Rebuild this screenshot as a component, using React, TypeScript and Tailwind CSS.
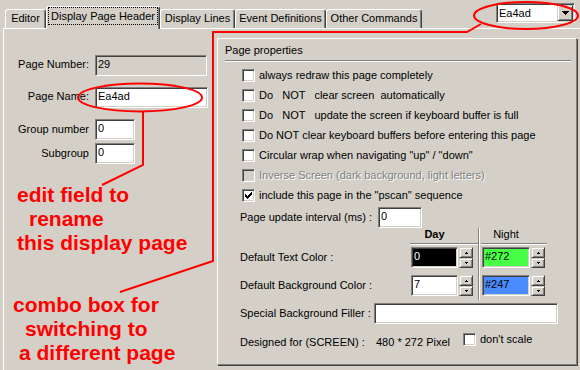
const sunken =
  "border border-t-[#808080] border-l-[#808080] border-b-white border-r-white shadow-[inset_1px_1px_0_#404040,inset_-1px_-1px_0_#d4d0c8]";
const raised =
  "border border-t-[#d4d0c8] border-l-[#d4d0c8] border-b-[#404040] border-r-[#404040] shadow-[inset_1px_1px_0_#ffffff,inset_-1px_-1px_0_#808080]";

function Tab({ label, w, active }: { label: string; w: string; active?: boolean }) {
  if (active) {
    return (
      <div
        className={`relative z-10 ${w} h-[23px] -mb-px bg-[#d4d0c8] border-t border-l border-r border-t-white border-l-white border-r-[#404040] shadow-[inset_-1px_0_0_#808080] rounded-t-[3px] px-px pb-[4px]`}
      >
        <div className="h-full border border-dotted border-black flex items-center justify-center leading-[13px]">
          {label}
        </div>
      </div>
    );
  }
  return (
    <div
      className={`${w} h-[19px] border-t border-l border-r border-t-white border-l-white border-r-[#404040] shadow-[inset_-1px_0_0_#808080] rounded-t-[3px] flex items-center justify-center pb-[2px] leading-[13px]`}
    >
      {label}
    </div>
  );
}

function Check({ checked, disabled }: { checked?: boolean; disabled?: boolean }) {
  return (
    <div
      className={`${sunken} w-[13px] h-[13px] shrink-0 ${disabled ? "bg-[#d4d0c8]" : "bg-white"} flex items-center justify-center`}
    >
      {checked && (
        <svg width="7" height="7" viewBox="0 0 7 7">
          <path
            d="M0 2h1v3H0z M1 3h1v3H1z M2 4h1v3H2z M3 3h1v3H3z M4 2h1v3H4z M5 1h1v3H5z M6 0h1v3H6z"
            fill="#000"
          />
        </svg>
      )}
    </div>
  );
}

function CheckRow({ label, checked, disabled }: { label: string; checked?: boolean; disabled?: boolean }) {
  return (
    <div className="h-[20px] flex items-center pl-[24px] gap-[4px]">
      <Check checked={checked} disabled={disabled} />
      <span
        className={`whitespace-pre leading-[13px] ${disabled ? "text-[#808080] [text-shadow:1px_1px_0_#ffffff]" : ""}`}
      >
        {label}
      </span>
    </div>
  );
}

function SpinBox({ value, w, color }: { value: string; w: string; color: string }) {
  return (
    <div className="flex gap-px">
      <div className={`${sunken} ${w} h-[21px] ${color} px-[2px] leading-[17px]`}>{value}</div>
      <div className="flex flex-col w-[14px] h-[21px]">
        <div className={`${raised} h-[11px] bg-[#d4d0c8] flex items-center justify-center`}>
          <svg width="3" height="2" viewBox="0 0 3 2">
            <path d="M1 0h1v1H1z M0 1h3v1H0z" fill="#000" />
          </svg>
        </div>
        <div className={`${raised} h-[10px] bg-[#d4d0c8] flex items-center justify-center`}>
          <svg width="3" height="2" viewBox="0 0 3 2">
            <path d="M0 0h3v1H0z M1 1h1v1H1z" fill="#000" />
          </svg>
        </div>
      </div>
    </div>
  );
}

function Field({ w, value, disabled }: { w: string; value: string; disabled?: boolean }) {
  return (
    <div
      className={`${sunken} ${w} h-[21px] ${disabled ? "bg-[#d4d0c8]" : "bg-white"} px-[2px] leading-[17px]`}
    >
      {value}
    </div>
  );
}

export default function App() {
  return (
    <div className="relative w-[580px] h-[370px] overflow-hidden bg-[#d4d0c8] text-black text-[11px] font-['Liberation_Sans',Arial,sans-serif]">
      {/* tab strip + page combo */}
      <div className="flex items-end h-[28px] pl-[5px]">
        <Tab label="Editor" w="w-[41px]" />
        <Tab label="Display Page Header" w="w-[114px]" active />
        <Tab label="Display Lines" w="w-[75px]" />
        <Tab label="Event Definitions" w="w-[91px]" />
        <Tab label="Other Commands" w="w-[96px]" />
        <div className={`${sunken} self-start mt-[3px] ml-auto mr-[5px] w-[79px] h-[20px] bg-white p-px flex`}>
          <span className="flex-1 pl-px leading-[16px]">Ea4ad</span>
          <div className={`${raised} w-[16px] h-full bg-[#d4d0c8] flex items-center justify-center`}>
            <svg width="7" height="4" viewBox="0 0 7 4">
              <path d="M0 0h7v1H0z M1 1h5v1H1z M2 2h3v1H2z M3 3h1v1H3z" fill="#000" />
            </svg>
          </div>
        </div>
      </div>

      {/* tab sheet */}
      <div className="ml-[3px] w-[600px] h-[360px] border-t border-l border-white flex">
        {/* left column */}
        <div className="w-[213px] shrink-0 flex flex-col pt-[26px]">
          <div className="flex items-center">
            <span className="w-[85px] text-right -mt-[3px]">Page Number:</span>
            <div className="ml-[6px]">
              <Field w="w-[112px]" value="29" disabled />
            </div>
          </div>
          <div className="flex items-center mt-[11px]">
            <span className="w-[85px] text-right -mt-[3px]">Page Name:</span>
            <div className="ml-[6px]">
              <Field w="w-[113px]" value="Ea4ad" />
            </div>
          </div>
          <div className="flex items-center mt-[11px]">
            <span className="w-[85px] text-right">Group number</span>
            <div className="ml-[6px]">
              <Field w="w-[40px]" value="0" />
            </div>
          </div>
          <div className="flex items-center mt-[3px]">
            <span className="w-[85px] text-right">Subgroup</span>
            <div className="ml-[6px]">
              <Field w="w-[40px]" value="0" />
            </div>
          </div>

          <div className="mt-[19px] text-[21px] leading-[24px] font-bold text-[#ff0000]">
            <div className="pl-[13px]">edit field to</div>
            <div className="pl-[25px]">rename</div>
            <div className="pl-[13px]">this display page</div>
          </div>
          <div className="mt-[38px] text-[21px] leading-[24px] font-bold text-[#ff0000]">
            <div className="pl-[9px]">combo box for</div>
            <div className="pl-[21px]">switching to</div>
            <div className="pl-[15px]">a different page</div>
          </div>
        </div>

        {/* page properties group */}
        <div className="mt-[9px] w-[360px] h-[327px] shrink-0 flex flex-col border border-t-white border-l-white border-r-[#808080] border-b-[#808080] shadow-[1px_1px_0_#404040]">
          <div className="mt-[4px] pl-[7px] leading-[14px]">Page properties</div>
          <div className="mt-[3px] ml-[7px] mr-[5px] h-[2px] border-t border-b border-t-[#808080] border-b-white" />

          <div className="mt-[3px] flex flex-col">
            <CheckRow label="always redraw this page completely" />
            <CheckRow label="Do   NOT   clear screen  automatically" />
            <CheckRow label="Do   NOT   update the screen if keyboard buffer is full" />
            <CheckRow label="Do NOT clear keyboard buffers before entering this page" />
            <CheckRow label={'Circular wrap when navigating "up" / "down"'} />
            <CheckRow label="Inverse Screen (dark background, light letters)" disabled />
            <CheckRow label={'include this page in the "pscan" sequence'} checked />
          </div>

          <div className="mt-[2px] pl-[22px] flex items-center h-[21px]">
            <span className="w-[138px]">Page update interval (ms) :</span>
            <Field w="w-[44px]" value="0" />
          </div>

          {/* colours: Day / Night */}
          <div className="pl-[22px] flex">
            <div className="w-[170px] flex flex-col pt-[19px]">
              <div className="h-[21px] flex items-center">Default Text Color :</div>
              <div className="h-[21px] mt-[7px] flex items-center">Default Background Color :</div>
            </div>
            <div className="w-[68px] flex flex-col pb-[4px]">
              <div className="h-[15px] ml-px w-[47px] text-center font-bold leading-[13px]">Day</div>
              <div className="h-[2px] border-t border-b border-t-[#808080] border-b-white" />
              <div className="mt-[2px] ml-px">
                <SpinBox value="0" w="w-[47px]" color="bg-black text-white" />
              </div>
              <div className="mt-[7px] ml-px">
                <SpinBox value="7" w="w-[47px]" color="bg-white" />
              </div>
            </div>
            <div className="w-[2px] border-l border-r border-l-[#808080] border-r-white" />
            <div className="w-[67px] flex flex-col">
              <div className="h-[15px] ml-[2px] w-[48px] text-center leading-[13px]">Night</div>
              <div className="h-[2px] ml-px border-t border-b border-t-[#808080] border-b-white" />
              <div className="mt-[2px] ml-[2px]">
                <SpinBox value="#272" w="w-[48px]" color="bg-[#48ff48]" />
              </div>
              <div className="mt-[7px] ml-[2px]">
                <SpinBox value="#247" w="w-[48px]" color="bg-[#4a8cff]" />
              </div>
            </div>
          </div>

          <div className="mt-[3px] pl-[22px] flex items-center h-[21px]">
            <span className="w-[134px]">Special Background Filler :</span>
            <Field w="w-[184px]" value="" />
          </div>

          <div className="mt-[9px] pl-[22px] flex items-start">
            <span className="w-[136px] mt-[3px] leading-[13px]">Designed for (SCREEN) :</span>
            <span className="w-[87px] mt-[3px] leading-[13px]">480 * 272 Pixel</span>
            <Check />
            <span className="ml-[4px] leading-[13px]">don't scale</span>
          </div>
        </div>
      </div>

      {/* red annotations drawn over the dialog */}
      <svg className="absolute inset-0 pointer-events-none" width="580" height="370" viewBox="0 0 580 370">
        <g fill="none" stroke="#ff0000" strokeWidth="2">
          <ellipse cx="526" cy="15.5" rx="52" ry="13.5" />
          <polyline points="481,24 467,32 213,32 213,261 120,292" />
          <ellipse cx="140" cy="97.5" rx="62" ry="14" />
          <polyline points="143,111 143,165 102,185" />
        </g>
      </svg>
    </div>
  );
}
